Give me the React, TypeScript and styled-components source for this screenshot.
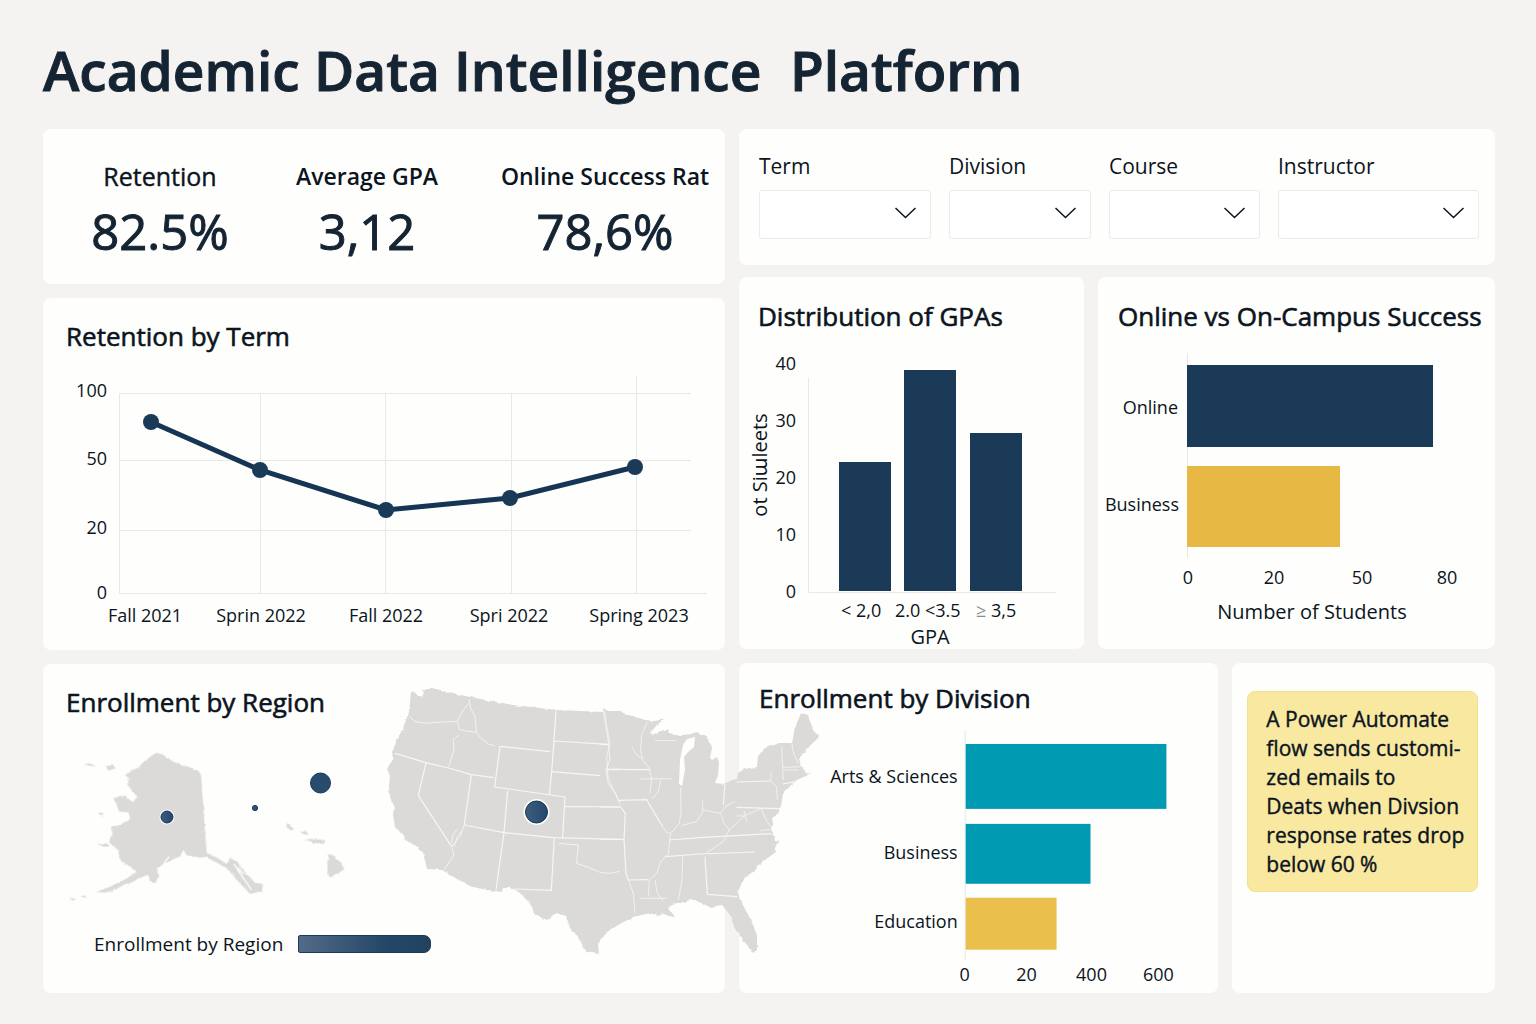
import React from "react";
import styled, { createGlobalStyle } from "styled-components";

const color = {
  page: "#f5f3f1",
  card: "#fefefd",
  ink: "#0b1420",
  heading: "#152433",
  navy: "#1a3a58",
  gold: "#e7b843",
  amber: "#ebbf4b",
  teal: "#009bb3",
  grid: "#e9e8e7",
  land: "#dbdad8",
  border: "#ecebea",
  note: "#f8e8a0",
};

const Global = createGlobalStyle`
  * { box-sizing: border-box; }
  body {
    margin: 0;
    background: ${color.page};
    color: ${color.ink};
    font-family: "Open Sans", "Noto Sans", sans-serif;
  }
`;

const Page = styled.main`
  padding: 32px 41px 31px 43px;
`;

const PageTitle = styled.h1`
  margin: 0 0 21px;
  font-size: 55px;
  line-height: 76px;
  font-weight: 600;
  color: ${color.heading};
  -webkit-text-stroke: 1px ${color.heading};
  white-space: pre;
`;

const Board = styled.div`
  display: grid;
  grid-template-columns: 682fr 756fr;
  gap: 14px;
`;

const Column = styled.div<{ $raised?: boolean }>`
  display: flex;
  flex-direction: column;
  gap: 14px;
  min-width: 0;
  position: relative;
  z-index: ${(p) => (p.$raised ? 1 : 0)};
`;

const Stack = styled.div`
  display: flex;
  flex-direction: column;
  gap: 12px;
`;

const Pair = styled.div<{ $columns: string }>`
  display: grid;
  grid-template-columns: ${(p) => p.$columns};
  gap: 14px;
  flex: 1 1 auto;
`;

const Card = styled.section`
  background: ${color.card};
  border-radius: 8px;
  min-width: 0;
`;

const CardTitle = styled.h2<{ $pad: string }>`
  margin: 0;
  padding: ${(p) => p.$pad};
  font-size: 26px;
  line-height: 30px;
  font-weight: 400;
  -webkit-text-stroke: 0.6px ${color.ink};
  white-space: nowrap;
`;

const Chart = styled.svg`
  display: block;
  width: 100%;
  height: auto;
  fill: ${color.ink};
  font-size: 18px;
`;

/* KPI strip */

const KpiCard = styled(Card)`
  display: grid;
  grid-template-columns: 158fr 216fr 220fr;
  gap: 20px;
  padding: 32px 10px 23px 38px;
`;

const Kpi = styled.div`
  display: flex;
  flex-direction: column;
  align-items: center;
  gap: 10px;
`;

const KpiLabel = styled.span<{ $strong?: boolean }>`
  font-size: ${(p) => (p.$strong ? 23 : 25)}px;
  line-height: 30px;
  font-weight: ${(p) => (p.$strong ? 600 : 400)};
  -webkit-text-stroke: ${(p) => (p.$strong ? 0 : 0.4)}px ${color.ink};
  white-space: nowrap;
`;

const KpiValue = styled.strong`
  font-size: 49px;
  line-height: 60px;
  font-weight: 400;
  color: ${color.heading};
  -webkit-text-stroke: 1px ${color.heading};
`;

/* Filters */

const FilterCard = styled(Card)`
  display: grid;
  grid-template-columns: 172fr 142fr 151fr 201fr;
  gap: 18px;
  padding: 21px 16px 26px 20px;
`;

const Filter = styled.div`
  display: flex;
  flex-direction: column;
  gap: 8px;
  min-width: 0;
`;

const FilterLabel = styled.label`
  font-size: 21px;
  line-height: 32px;
`;

const SelectBox = styled.div`
  display: grid;
  align-items: center;
  & > * {
    grid-area: 1 / 1;
  }
  & > svg {
    justify-self: end;
    margin-right: 15px;
    margin-bottom: 3px;
    pointer-events: none;
  }
`;

const Select = styled.select`
  appearance: none;
  width: 100%;
  height: 49px;
  padding: 0 40px 0 12px;
  border: 1px solid ${color.border};
  border-radius: 3px;
  background: #ffffff;
  color: ${color.ink};
  font: inherit;
  font-size: 18px;
`;

/* Enrollment map */

const RegionCard = styled(Card)`
  position: relative;
  display: flex;
  flex-direction: column;
  justify-content: space-between;
  flex: 1 1 auto;
  min-height: 329px;
`;

const MapCanvas = styled.svg`
  position: absolute;
  top: 0;
  left: 0;
  width: calc(100% * 782 / 682);
  pointer-events: none;
`;

const Legend = styled.div`
  display: flex;
  align-items: center;
  gap: 15px;
  padding: 0 0 36px 51px;
  font-size: 19px;
  line-height: 26px;
`;

const LegendRamp = styled.span`
  width: 133px;
  height: 18px;
  border: 1px solid #1c3a5a;
  border-radius: 2px 7px 7px 2px;
  background: linear-gradient(90deg, #536b88, #254768 65%, #22425f);
`;

/* Note */

const NoteCard = styled(Card)`
  padding: 28px 17px 28px 15px;
`;

const Note = styled.p`
  margin: 0;
  padding: 13px 8px 12px 18px;
  border: 1px solid #f2e08e;
  border-radius: 8px;
  background: ${color.note};
  font-size: 21px;
  line-height: 29px;
  -webkit-text-stroke: 0.4px ${color.ink};
  white-space: nowrap;
`;

const filters = ["Term", "Division", "Course", "Instructor"];

const retention = [
  { label: "Fall 2021", x: 108, y: 62, grid: 76, top: 33, text: 102 },
  { label: "Sprin 2022", x: 217, y: 110, grid: 217, top: 33, text: 218 },
  { label: "Fall 2022", x: 343, y: 150, grid: 342, top: 33, text: 343 },
  { label: "Spri 2022", x: 467, y: 138, grid: 468, top: 33, text: 466 },
  { label: "Spring 2023", x: 592, y: 107, grid: 593, top: 16, text: 596 },
];

const retentionTicks = [
  { label: "100", y: 33, end: 648, text: 37 },
  { label: "50", y: 100, end: 648, text: 105 },
  { label: "20", y: 170, end: 648, text: 174 },
  { label: "0", y: 233, end: 664, text: 239 },
];

function RetentionChart() {
  return (
    <Chart viewBox="0 0 682 290" role="img" aria-label="Retention by term">
      <g stroke={color.grid} strokeWidth="1" shapeRendering="crispEdges">
        {retentionTicks.map((t) => (
          <line key={t.label} x1="76" x2={t.end} y1={t.y} y2={t.y} />
        ))}
        {retention.map((p) => (
          <line key={p.label} x1={p.grid} x2={p.grid} y1={p.top} y2="233" />
        ))}
      </g>
      <polyline
        points={retention.map((p) => `${p.x},${p.y}`).join(" ")}
        fill="none"
        stroke="#163453"
        strokeWidth="5"
      />
      {retention.map((p) => (
        <circle key={p.label} cx={p.x} cy={p.y} r="8" fill={color.navy} />
      ))}
      {retentionTicks.map((t) => (
        <text key={t.label} x="64" y={t.text} textAnchor="end">
          {t.label}
        </text>
      ))}
      {retention.map((p) => (
        <text key={p.label} x={p.text} y="262" textAnchor="middle">
          {p.label}
        </text>
      ))}
    </Chart>
  );
}

const gpaBars = [
  { x: 100, y: 117 },
  { x: 165, y: 25 },
  { x: 231, y: 88 },
];

function GpaChart() {
  return (
    <Chart viewBox="0 0 345 304" role="img" aria-label="Distribution of GPAs">
      <path d="M69.5 33V247.5H317" fill="none" stroke={color.grid} />
      {gpaBars.map((b) => (
        <rect key={b.x} x={b.x} y={b.y} width="52" height={246 - b.y} fill={color.navy} />
      ))}
      {["40", "30", "20", "10", "0"].map((t, i) => (
        <text key={t} x="57" y={25 + i * 57} textAnchor="end">
          {t}
        </text>
      ))}
      <text x="102" y="272">&lt; 2,0</text>
      <text x="156" y="272">2.0 &lt;3.5</text>
      <text x="237" y="272">
        <tspan fill="#8a8d90">≥</tspan> 3,5
      </text>
      <text x="191" y="299" textAnchor="middle" fontSize="20">
        GPA
      </text>
      <text transform="translate(28 120) rotate(-90)" textAnchor="middle" fontSize="20">
        ot Siɯleets
      </text>
    </Chart>
  );
}

function SuccessChart() {
  return (
    <Chart viewBox="0 0 397 304" role="img" aria-label="Online versus on-campus success">
      <line x1="89.5" x2="89.5" y1="8" y2="213" stroke={color.grid} />
      <rect x="89" y="20" width="246" height="82" fill={color.navy} />
      <rect x="89" y="121" width="153" height="81" fill={color.gold} />
      <text x="80" y="69" textAnchor="end">Online</text>
      <text x="81" y="166" textAnchor="end">Business</text>
      {[["0", 90], ["20", 176], ["50", 264], ["80", 349]].map(([t, x]) => (
        <text key={t} x={x} y="239" textAnchor="middle">
          {t}
        </text>
      ))}
      <text x="214" y="274" textAnchor="middle" fontSize="20">
        Number of Students
      </text>
    </Chart>
  );
}

const divisions = [
  { label: "Arts & Sciences", y: 24, h: 65, w: 201, fill: color.teal, text: 63 },
  { label: "Business", y: 104, h: 60, w: 125, fill: color.teal, text: 139 },
  { label: "Education", y: 178, h: 52, w: 91, fill: color.amber, text: 208 },
];

function DivisionChart() {
  return (
    <Chart viewBox="0 0 480 272" role="img" aria-label="Enrollment by division">
      <line x1="226.5" x2="226.5" y1="10" y2="240" stroke={color.grid} />
      {divisions.map((d) => (
        <g key={d.label}>
          <rect x="227" y={d.y} width={d.w} height={d.h} fill={d.fill} />
          <text x="219" y={d.text} textAnchor="end">
            {d.label}
          </text>
        </g>
      ))}
      {[["0", 226], ["20", 288], ["400", 353], ["600", 420]].map(([t, x]) => (
        <text key={t} x={x} y="261" textAnchor="middle">
          {t}
        </text>
      ))}
    </Chart>
  );
}

const mainland =
  "M411 692L415 693 422 697 424 692 421 690 426 690 432 688 470 697 513 705 557 710 603 712 605 709 608 711 621 711 623 714 633 716 645 720 655 721 664 719 657 725 650 733 652 735 658 732 667 729 669 733 680 736 690 734 697 732 700 735 705 735 709 740 712 748 710 758 712 760 717 757 719 762 718 775 715 783 724 784 732 780 737 779 738 773 744 769 757 767 758 756 765 748 780 743 792 743 795 727 797 723 801 713 808 715 813 730 819 737 812 744 808 748 804 752 799 759 802 767 807 774 812 772 806 776 797 780 791 785 783 794 781 806 778 812 773 820 771 829 775 837 776 841 780 842 774 846 776 852 765 860 758 866 754 872 743 880 738 892 740 900 750 918 757 935 757 950 753 953 750 948 744 942 740 934 735 929 730 915 722 905 716 906 712 908 697 901 690 899 684 903 677 903 668 907 672 914 676 918 663 914 658 916 650 913 633 917 620 924 607 932 598 944 599 953 585 951 580 940 570 928 566 916 557 913 547 920 535 914 527 900 517 890 514 888 503 888 502 892 487 890 473 887 457 879 442 870 427 869 423 853 415 845 405 840 402 834 395 827 393 815 394 806 390 797 389 787 390 775 387 769 392 760 393 750 397 740 403 728 409 712Z";

function RegionMap() {
  return (
    <MapCanvas viewBox="43 664 782 329" aria-hidden="true">
      <defs>
        <filter id="coast" x="-5%" y="-5%" width="110%" height="110%">
          <feTurbulence type="fractalNoise" baseFrequency="0.18" numOctaves="2" seed="4" />
          <feDisplacementMap in="SourceGraphic" scale="3" xChannelSelector="R" yChannelSelector="G" />
        </filter>
        <linearGradient id="dot" x1="0" x2="1">
          <stop offset="0" stopColor="#3f5e7d" />
          <stop offset="1" stopColor="#24476b" />
        </linearGradient>
      </defs>

      <g fill={color.land} filter="url(#coast)">
        <path d={mainland} />
        <g transform="translate(40 660) scale(0.3333)">
          <path d="M350 278L375 288 400 305 430 318 445 320 475 332 483 345 500 578 530 592 560 612 572 594 590 605 605 625 645 668 668 672 668 698 655 692 630 702 610 680 590 660 565 630 535 610 500 592 470 592 440 586 430 570 420 590 395 600 372 612 350 625 358 650 345 670 330 662 325 645 300 652 280 665 250 675 225 690 195 698 168 696 210 680 260 655 290 635 270 620 245 605 235 588 236 572 205 545 218 520 212 502 245 492 268 480 270 458 238 455 228 430 218 415 250 405 275 424 292 412 275 390 262 375 268 355 255 345 300 318 330 290Z" />
          <path d="M132 312L150 310 168 318 150 318ZM197 318L222 316 222 326 208 332ZM174 458L192 458 185 468ZM172 550L200 550 210 560 190 560ZM120 708L140 706 134 714ZM88 714L108 716 98 722Z" />
          <path d="M740 492L762 506 755 512 740 502ZM780 515L800 514 806 526 790 522ZM795 538L825 536 858 542 850 552 825 549ZM864 582L880 586 900 606 914 628 895 642 872 652 862 640Z" />
        </g>
      </g>
      <path d="M683 745L687 739 695 737 694 747 688 752 684 757 685 770 682 786 679 784 680 760Z" fill={color.card} />
      <path d="M388 590L376 604 364 628M582 612L600 640 622 672 634 690M585 618L612 642" transform="translate(40 660) scale(0.3333)" fill="none" stroke={color.card} strokeWidth="4" />

      <g fill="none" stroke="#f7f6f4" strokeWidth="3.6" strokeLinejoin="round">
        <g transform="translate(370 670) scale(0.3333)">
          <path d="M75 250L168 278 235 294 304 314 371 323M168 278L145 377 245 530M304 314L283 465 402 488 550 503 750 508M413 362L402 488 378 660M390 229L540 245M390 229L374 351 585 381 578 502M558 125L552 213 545 305 538 375M552 213L716 223M545 305L690 317M585 409L750 411M553 503L544 661 438 657M707 299L750 298" />
          <path d="M566 520L625 525 620 580 655 592 690 607 720 610 750 604M118 140L135 155 170 160 215 156 262 154 268 178 290 184 318 186 330 202 355 222 375 228M297 88L302 115 315 140 320 186M268 195L250 208 252 240 236 290M262 154L280 120 296 100M700 125L710 180 716 223 720 270 708 299 715 340 738 372 745 392M283 465L270 500 245 530 252 555 222 600M262 478L248 495 245 520M278 480L262 500 252 530" strokeWidth="2.6" />
        </g>
        <g transform="translate(600 680) scale(0.3333)">
          <path d="M0 193L25 194M18 268L148 269M55 361L140 359 155 385 188 440M0 381L62 381 76 400 72 478 78 580 85 600 145 599M0 478L72 478M208 480L300 473 515 461M195 530L300 522 465 516M315 530L322 643 412 650M375 312L372 345 370 375M410 306L512 303M410 382L536 386M548 312L592 304" />
          <path d="M14 92L20 140 30 190 20 230 24 290 40 330 62 375M142 125L125 165 122 210 128 240 148 265 155 300 150 340M95 200L110 225 125 235M120 297L215 296M165 182L230 182M182 300L175 335 158 355M242 322L243 400 238 430 212 460 205 520 182 545 170 580 148 600 145 650M188 440L200 458 212 460M245 436L290 425 308 395 308 362M308 390L362 400 378 378 406 364M362 400L372 430 388 450 432 408M388 450L370 485 320 518M85 600L100 640 105 700M248 530L246 600 235 660M120 655L200 655M432 392L440 425M410 408L432 408 485 385 495 415 512 440M480 452L518 448M512 303L530 320 532 360M512 303L514 275M545 200L548 262 602 260M548 262L550 300M575 188L582 225 596 250M552 270L595 270M165 600L172 640 190 665" strokeWidth="2.4" />
        </g>
      </g>

      <g fill="url(#dot)" stroke="#17375a" strokeWidth="1">
        <circle cx="536.5" cy="812" r="13" fill={color.card} stroke="none" />
        <circle cx="536.5" cy="812" r="11" />
        <circle cx="167" cy="817" r="7.5" fill={color.card} stroke="none" />
        <circle cx="167" cy="817" r="6" />
        <circle cx="255" cy="808" r="2.6" />
        <circle cx="320.5" cy="783" r="10" fill="#284c6e" />
      </g>
    </MapCanvas>
  );
}

export default function App() {
  return (
    <>
      <Global />
      <Page>
        <PageTitle>{"Academic Data Intelligence  Platform"}</PageTitle>
        <Board>
          <Column $raised>
            <KpiCard>
              <Kpi>
                <KpiLabel>Retention</KpiLabel>
                <KpiValue>82.5%</KpiValue>
              </Kpi>
              <Kpi>
                <KpiLabel $strong>Average GPA</KpiLabel>
                <KpiValue>3,12</KpiValue>
              </Kpi>
              <Kpi>
                <KpiLabel $strong>Online Success Rat</KpiLabel>
                <KpiValue>78,6%</KpiValue>
              </Kpi>
            </KpiCard>
            <Card>
              <CardTitle $pad="23px 23px 9px">Retention by Term</CardTitle>
              <RetentionChart />
            </Card>
            <RegionCard>
              <CardTitle $pad="23px 23px 0">Enrollment by Region</CardTitle>
              <RegionMap />
              <Legend>
                Enrollment by Region
                <LegendRamp />
              </Legend>
            </RegionCard>
          </Column>

          <Column>
            <Stack>
              <FilterCard>
                {filters.map((name) => (
                  <Filter key={name}>
                    <FilterLabel htmlFor={name}>{name}</FilterLabel>
                    <SelectBox>
                      <Select id={name} defaultValue="">
                        <option value="" />
                        <option value="all">All</option>
                      </Select>
                      <svg width="21" height="12" viewBox="0 0 21 12" fill="none" stroke={color.ink} strokeWidth="1.5">
                        <path d="M0.500 1L10.500 10.500L20.500 1" />
                      </svg>
                    </SelectBox>
                  </Filter>
                ))}
              </FilterCard>
              <Pair $columns="345fr 397fr">
                <Card>
                  <CardTitle $pad="24px 0 14px 19px">Distribution of GPAs</CardTitle>
                  <GpaChart />
                </Card>
                <Card>
                  <CardTitle $pad="24px 0 14px 20px">Online vs On-Campus Success</CardTitle>
                  <SuccessChart />
                </Card>
              </Pair>
            </Stack>
            <Pair $columns="480fr 263fr">
              <Card>
                <CardTitle $pad="20px 20px 7px">Enrollment by Division</CardTitle>
                <DivisionChart />
              </Card>
              <NoteCard>
                <Note>
                  A Power Automate
                  <br />
                  flow sends customi-
                  <br />
                  zed emails to
                  <br />
                  Deats when Divsion
                  <br />
                  response rates drop
                  <br />
                  below 60 %
                </Note>
              </NoteCard>
            </Pair>
          </Column>
        </Board>
      </Page>
    </>
  );
}
